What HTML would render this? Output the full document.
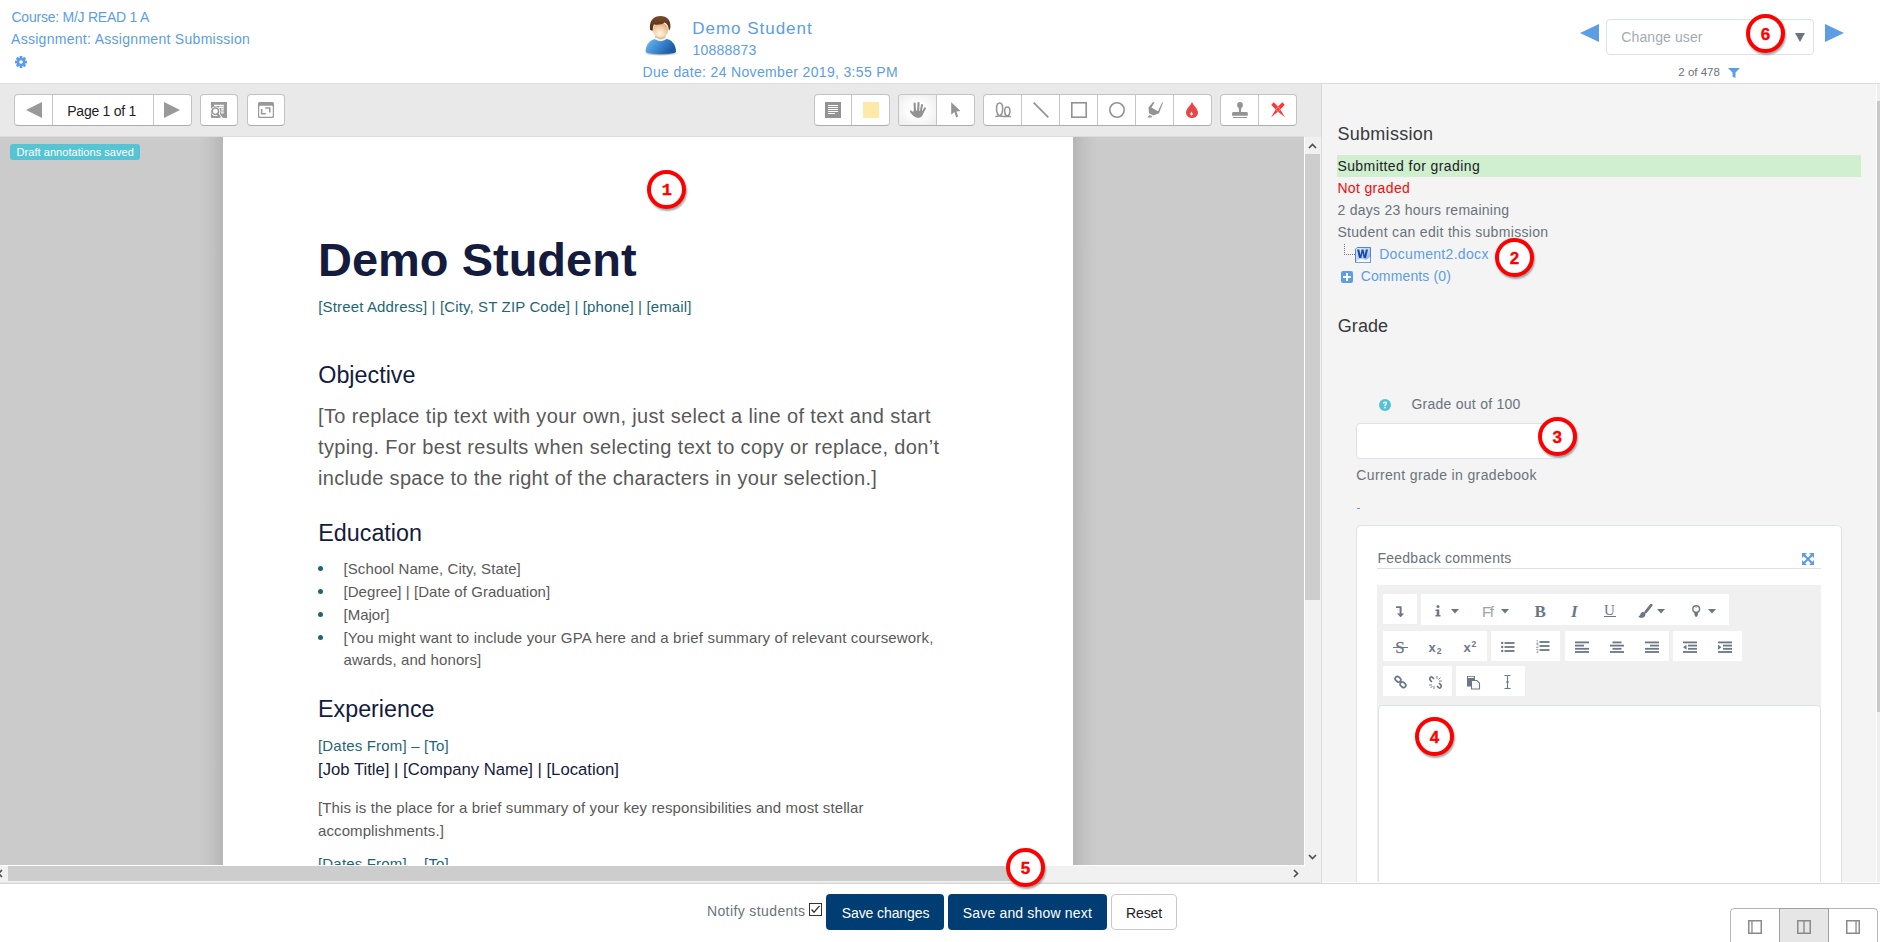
<!DOCTYPE html>
<html><head><meta charset="utf-8">
<style>
html,body{margin:0;padding:0;}
body{width:1880px;height:942px;overflow:hidden;position:relative;background:#fff;font-family:"Liberation Sans",sans-serif;}
.a{position:absolute;box-sizing:border-box;}
.t{position:absolute;white-space:nowrap;line-height:1;}
svg{position:absolute;overflow:visible;}
</style></head><body>
<div class="a" style="left:0px;top:83px;width:1880px;height:1px;background:#dcdcdc;"></div>
<div class="t" style="left:11.5px;top:10.0px;font-size:14px;color:#5c9de5;letter-spacing:-0.24px;font-weight:normal;font-family:'Liberation Sans',sans-serif;">Course: M/J READ 1 A</div>
<div class="t" style="left:11.0px;top:32.0px;font-size:14px;color:#5c9de5;letter-spacing:0.29px;font-weight:normal;font-family:'Liberation Sans',sans-serif;">Assignment: Assignment Submission</div>
<svg style="left:15px;top:56px" width="12" height="12" viewBox="0 0 12 12"><g fill="#5c9de5"><circle cx="6" cy="6" r="4.3"/><rect x="4.6" y="0" width="2.8" height="12" transform="rotate(0 6 6)"/><rect x="4.6" y="0" width="2.8" height="12" transform="rotate(45 6 6)"/><rect x="4.6" y="0" width="2.8" height="12" transform="rotate(90 6 6)"/><rect x="4.6" y="0" width="2.8" height="12" transform="rotate(135 6 6)"/></g><circle cx="6" cy="6" r="1.8" fill="#fff"/></svg>
<svg style="left:643px;top:14px" width="37" height="42" viewBox="0 0 37 42">
<defs>
<radialGradient id="sk" cx="0.45" cy="0.75" r="0.8"><stop offset="0" stop-color="#fff6ea"/><stop offset="0.5" stop-color="#f2d0a8"/><stop offset="1" stop-color="#d8a06a"/></radialGradient>
<linearGradient id="sh" x1="0" y1="0" x2="1" y2="0.4"><stop offset="0" stop-color="#78bdf0"/><stop offset="0.5" stop-color="#3f8fd6"/><stop offset="1" stop-color="#1c5aa6"/></linearGradient>
<linearGradient id="hr" x1="0" y1="0" x2="0" y2="1"><stop offset="0" stop-color="#7a4a28"/><stop offset="1" stop-color="#4e2c14"/></linearGradient>
<radialGradient id="sd" cx="0.5" cy="0.5" r="0.5"><stop offset="0" stop-color="#000" stop-opacity="0.6"/><stop offset="1" stop-color="#000" stop-opacity="0"/></radialGradient>
</defs>
<ellipse cx="18" cy="39.5" rx="17.5" ry="2.4" fill="url(#sd)"/>
<path d="M2.6 37.5 C2.6 30 8 25 14 24.5 L22 24.5 C28 25 33 30 33 37.5 C33 39.3 30 39.8 18 39.8 C6 39.8 2.6 39.3 2.6 37.5 Z" fill="url(#sh)"/>
<rect x="12" y="20" width="10.5" height="6" fill="#e6be93"/>
<path d="M11.5 24.8 Q17.5 29.5 24 24.8 L22.8 23.6 Q17.5 27.2 12.8 23.6 Z" fill="#f2f4f6"/>
<ellipse cx="17.5" cy="16" rx="7.7" ry="7.6" fill="url(#sk)"/>
<path d="M7 15.5 C6 6 11 1.9 17.5 1.9 C24 1.9 28 6 27.4 13 C27.2 14.8 26.6 16 26 16.4 C25.6 12.5 24.5 10 21.5 8.5 C19.5 10.5 15 11 11 10.5 C10 12 9.7 14 9.8 16.6 C8.6 16.8 7.3 16.2 7 15.5 Z" fill="url(#hr)"/>
</svg>
<div class="t" style="left:692.3px;top:20.0px;font-size:17px;color:#5c9de5;letter-spacing:0.97px;font-weight:normal;font-family:'Liberation Sans',sans-serif;">Demo Student</div>
<div class="t" style="left:692.5px;top:43.0px;font-size:14px;color:#5c9de5;letter-spacing:0.2px;font-weight:normal;font-family:'Liberation Sans',sans-serif;">10888873</div>
<div class="t" style="left:642.5px;top:65.0px;font-size:14px;color:#5c9de5;letter-spacing:0.34px;font-weight:normal;font-family:'Liberation Sans',sans-serif;">Due date: 24 November 2019, 3:55 PM</div>
<svg style="left:1580px;top:24px" width="19" height="18"><path d="M0 9 L19 0 L19 18 Z" fill="#5c9de5"/></svg>
<svg style="left:1825px;top:24px" width="19" height="18"><path d="M19 9 L0 0 L0 18 Z" fill="#5c9de5"/></svg>
<div class="a" style="left:1606px;top:19px;width:208px;height:36px;border:1px solid #dee2e6;border-radius:4px;background:#fff;"></div>
<div class="t" style="left:1621.3px;top:30.0px;font-size:14px;color:#a3abb3;letter-spacing:0.1px;font-weight:normal;font-family:'Liberation Sans',sans-serif;">Change user</div>
<svg style="left:1795px;top:33px" width="10" height="9"><path d="M0 0 L10 0 L5 9 Z" fill="#6c757d"/></svg>
<div class="t" style="left:1678.3px;top:67.0px;font-size:11.5px;color:#6a737b;letter-spacing:0px;font-weight:normal;font-family:'Liberation Sans',sans-serif;">2 of 478</div>
<svg style="left:1728px;top:68px" width="12" height="10" viewBox="0 0 12 10"><path d="M0 0 L12 0 L7.5 4.5 L7.5 10 L4.5 8.5 L4.5 4.5 Z" fill="#5c9de5"/></svg>
<div class="a" style="left:0px;top:84px;width:1321px;height:53px;background:#e9e9e9;"></div>
<div class="a" style="left:0px;top:136px;width:1304px;height:1px;background:#dcdcdc;"></div>
<div class="a" style="left:1321px;top:84px;width:1px;height:799px;background:#dadada;"></div>
<div class="a" style="left:14px;top:94px;width:178px;height:32px;background:#fff;border:1px solid #c3c3c3;border-bottom-color:#adadad;border-radius:4px;"></div>
<div class="a" style="left:52px;top:95px;width:1px;height:30px;background:#c6c6c6;"></div>
<div class="a" style="left:153px;top:95px;width:1px;height:30px;background:#c6c6c6;"></div>
<div class="t" style="left:67.3px;top:104.0px;font-size:14px;color:#1d2125;letter-spacing:-0.26px;font-weight:normal;font-family:'Liberation Sans',sans-serif;">Page 1 of 1</div>
<svg style="left:26px;top:102px" width="16" height="16"><path d="M0 8 L16 0 L16 16 Z" fill="#999"/></svg>
<svg style="left:164px;top:102px" width="16" height="16"><path d="M16 8 L0 0 L0 16 Z" fill="#999"/></svg>
<div class="a" style="left:200px;top:94px;width:38px;height:32px;background:#fff;border:1px solid #c3c3c3;border-bottom-color:#adadad;border-radius:4px;"></div>
<div class="a" style="left:247px;top:94px;width:38px;height:32px;background:#fff;border:1px solid #c3c3c3;border-bottom-color:#adadad;border-radius:4px;"></div>
<svg style="left:211px;top:102px" width="16" height="16" viewBox="0 0 16 16">
<rect width="16" height="16" fill="#999"/>
<path d="M3 2.7 H12.8 V4 H3 Z M8 4.6 H12.8 V5.9 H8 Z M10 6.6 H12.8 V7.8 H10 Z M10 8.4 H12.8 V9.6 H10 Z M10 10.2 H12.8 V11.4 H10 Z" fill="#fff"/>
<circle cx="4.4" cy="9.3" r="4.9" fill="#fff"/>
<path d="M5.5 12 L8.5 16 H12 L8 11 Z" fill="#fff"/>
<circle cx="4.4" cy="9.3" r="3.2" fill="none" stroke="#999" stroke-width="1.5"/>
<path d="M6.4 11.6 L9.2 15.6" stroke="#999" stroke-width="2"/>
<rect x="0" y="8" width="0.6" height="8" fill="#999"/>
</svg>
<svg style="left:258px;top:102px" width="16" height="16" viewBox="0 0 16 16">
<rect x="0" y="0" width="16" height="16" rx="1.6" fill="#999"/>
<rect x="1.2" y="3.8" width="13.6" height="11" rx="1" fill="#fff"/>
<path d="M2.9 6.9 H4.4 V11 H7.8 V12.5 H2.9 Z M7.3 5.2 H12.5 V10.5 H11 V6.7 H7.3 Z" fill="#999"/>
</svg>
<div class="a" style="left:814px;top:94px;width:76px;height:32px;background:#fff;border:1px solid #c3c3c3;border-bottom-color:#adadad;border-radius:4px;"></div>
<div class="a" style="left:851px;top:95px;width:1px;height:30px;background:#c6c6c6;"></div>
<div class="a" style="left:898px;top:94px;width:77px;height:32px;background:#fff;border:1px solid #c3c3c3;border-bottom-color:#adadad;border-radius:4px;"></div>
<div class="a" style="left:936px;top:95px;width:1px;height:30px;background:#c6c6c6;"></div>
<div class="a" style="left:899px;top:95px;width:37px;height:30px;background:radial-gradient(ellipse at center,#fff 30%,#ececec 100%);border-radius:3px 0 0 3px;"></div>
<div class="a" style="left:983px;top:94px;width:229px;height:32px;background:#fff;border:1px solid #c3c3c3;border-bottom-color:#adadad;border-radius:4px;"></div>
<div class="a" style="left:1021px;top:95px;width:1px;height:30px;background:#c6c6c6;"></div>
<div class="a" style="left:1059px;top:95px;width:1px;height:30px;background:#c6c6c6;"></div>
<div class="a" style="left:1097px;top:95px;width:1px;height:30px;background:#c6c6c6;"></div>
<div class="a" style="left:1135px;top:95px;width:1px;height:30px;background:#c6c6c6;"></div>
<div class="a" style="left:1173px;top:95px;width:1px;height:30px;background:#c6c6c6;"></div>
<div class="a" style="left:1220px;top:94px;width:77px;height:32px;background:#fff;border:1px solid #c3c3c3;border-bottom-color:#adadad;border-radius:4px;"></div>
<div class="a" style="left:1258px;top:95px;width:1px;height:30px;background:#c6c6c6;"></div>
<svg style="left:825px;top:102px" width="16" height="16" viewBox="0 0 16 16">
<rect width="16" height="16" fill="#939393"/>
<g fill="#fff" shape-rendering="crispEdges"><rect x="3" y="3" width="10" height="1"/><rect x="3" y="5" width="10" height="1"/><rect x="3" y="7" width="10" height="1"/><rect x="3" y="9" width="10" height="1"/><rect x="3" y="11" width="7" height="1"/></g>
</svg>
<div class="a" style="left:863px;top:102px;width:16px;height:16px;background:#ffe9a8;"></div>
<svg style="left:910px;top:102px" width="16" height="16" viewBox="0 0 16 16">
<g stroke="#939393" stroke-linecap="round" fill="none">
<path d="M4.6 1.6 L5 9" stroke-width="2.1"/>
<path d="M8.5 1.1 L8.2 8.5" stroke-width="2.1"/>
<path d="M12 3 L10.8 9.5" stroke-width="2"/>
<path d="M15 6.3 L12.3 11" stroke-width="2"/>
<path d="M1 9.6 L4.2 13.2" stroke-width="2.2"/>
</g>
<path d="M3.6 8.2 L13.6 9.2 C13.4 12.5 12 15.9 8 15.9 C5.2 15.9 3.9 14 2.8 12.3 Z" fill="#939393"/>
</svg>
<svg style="left:951px;top:102px" width="10" height="16" viewBox="0 0 10 16">
<path d="M0.2 0.3 L0.2 12.8 L3.4 10 L5.2 15.5 L7.2 14.6 L5.4 9.4 L9.4 8.9 Z" fill="#939393"/>
</svg>
<svg style="left:995px;top:102px" width="16" height="16" viewBox="0 0 16 16">
<path d="M0.3 14.6 Q2.5 14 4.6 14.1 C0.4 11.5 0.6 0.9 4.6 0.9 C8.6 0.9 8.8 11.5 4.6 14.1 Q8.5 14.9 12.3 14.2 C8.7 12.5 8.8 4.9 12.3 4.9 C15.8 4.9 15.9 12.5 12.3 14.2 Q14.2 14.7 15.8 14.6" fill="none" stroke="#939393" stroke-width="1.5"/>
</svg>
<svg style="left:1033px;top:102px" width="16" height="16"><path d="M0.7 0.7 L15.3 15.3" stroke="#939393" stroke-width="1.7"/></svg>
<svg style="left:1071px;top:102px" width="16" height="16"><rect x="0.8" y="0.8" width="14.4" height="14.4" fill="none" stroke="#939393" stroke-width="1.6"/></svg>
<svg style="left:1109px;top:102px" width="16" height="16"><circle cx="8" cy="8" r="7.2" fill="none" stroke="#939393" stroke-width="1.6"/></svg>
<svg style="left:1147px;top:102px" width="16" height="16" viewBox="0 0 16 16">
<path d="M0.2 15.6 L2.6 13.1 L5 14.2 L4.5 15.6 Z M1.5 5.4 L5.8 0.2 L7.7 0.2 L4.4 5.4 L11 9.2 L15.2 0.2 L16 0.8 L12 11.3 L6.4 13.6 L2 11.3 Z" fill="#939393"/>
</svg>
<svg style="left:1186px;top:102px" width="12" height="16" viewBox="0 0 12 16">
<path d="M6 0 C7.5 3.5 12 7 12 10.5 C12 13.8 9.3 16 6 16 C2.7 16 0 13.8 0 10.5 C0 7 4.5 3.5 6 0 Z" fill="#e84646"/>
<path d="M5.5 9.5 C6 10.5 6.8 11.5 6.8 12.3 C6.8 13 6.2 13.4 5.5 13.4 C4.8 13.4 4.3 13 4.3 12.3 C4.3 11.5 5 10.5 5.5 9.5 Z" fill="#fff"/>
</svg>
<svg style="left:1231px;top:102px" width="17" height="16" viewBox="0 0 17 16">
<circle cx="9" cy="3" r="2.9" fill="#939393"/>
<path d="M7.6 4.5 L10.4 4.5 L9.9 10.3 L8.1 10.3 Z" fill="#939393"/>
<path d="M1.1 11.3 Q1.1 10 2.4 10 L15.5 10 Q16.8 10 16.8 11.3 L16.8 13.8 L1.1 13.8 Z" fill="#939393"/>
<rect x="2.1" y="15" width="13.9" height="0.95" fill="#939393"/>
</svg>
<svg style="left:1271px;top:102px" width="14" height="16" viewBox="0 0 14 16">
<path d="M0.3 2.7 L2.7 0.3 L8.4 6.1 L13.9 15.2 L5.6 8.4 Z M13.7 2.7 L11.3 0.3 L5.6 6.1 L0.1 15.2 L8.4 8.4 Z" fill="#ff3535"/>
<path d="M4.8 7.3 L7 5 L9.2 7.3 L7 9.6 Z" fill="#ff3535"/>
</svg>
<div class="a" style="left:0;top:137px;width:1304px;height:728px;background:#cbcbcb;overflow:hidden;">
<div class="a" style="left:199px;top:0px;width:24px;height:729px;background:linear-gradient(90deg,rgba(0,0,0,0) 0,rgba(0,0,0,0.04) 50%,rgba(0,0,0,0.1) 100%);"></div>
<div class="a" style="left:1073px;top:0px;width:24px;height:729px;background:linear-gradient(270deg,rgba(0,0,0,0) 0,rgba(0,0,0,0.04) 50%,rgba(0,0,0,0.1) 100%);"></div>
<div class="a" style="left:223px;top:0;width:850px;height:760px;background:#fff;">
<div class="t" style="left:95.0px;top:99.0px;font-size:47px;color:#141b3d;letter-spacing:0px;font-weight:bold;font-family:'Liberation Sans',sans-serif;">Demo Student</div>
<div class="t" style="left:95.3px;top:162.0px;font-size:15px;color:#1e6674;letter-spacing:0.14px;font-weight:normal;font-family:'Liberation Sans',sans-serif;">[Street Address] | [City, ST ZIP Code] | [phone] | [email]</div>
<div class="t" style="left:95.3px;top:227.0px;font-size:23.3px;color:#141b3d;letter-spacing:0px;font-weight:normal;font-family:'Liberation Sans',sans-serif;">Objective</div>
<div class="t" style="left:95.0px;top:269.0px;font-size:20px;color:#595959;letter-spacing:0.36px;font-weight:normal;font-family:'Liberation Sans',sans-serif;">[To replace tip text with your own, just select a line of text and start</div>
<div class="t" style="left:95.0px;top:300.0px;font-size:20px;color:#595959;letter-spacing:0.35px;font-weight:normal;font-family:'Liberation Sans',sans-serif;">typing. For best results when selecting text to copy or replace, don’t</div>
<div class="t" style="left:95.0px;top:331.0px;font-size:20px;color:#595959;letter-spacing:0.33px;font-weight:normal;font-family:'Liberation Sans',sans-serif;">include space to the right of the characters in your selection.]</div>
<div class="t" style="left:95.3px;top:385.0px;font-size:23.3px;color:#141b3d;letter-spacing:0px;font-weight:normal;font-family:'Liberation Sans',sans-serif;">Education</div>
<div class="a" style="left:95px;top:428.5px;width:5px;height:5px;background:#1e6674;border-radius:50%;"></div>
<div class="t" style="left:120.5px;top:424.0px;font-size:15px;color:#595959;letter-spacing:0.1px;font-weight:normal;font-family:'Liberation Sans',sans-serif;">[School Name, City, State]</div>
<div class="a" style="left:95px;top:451.5px;width:5px;height:5px;background:#1e6674;border-radius:50%;"></div>
<div class="t" style="left:120.5px;top:447.0px;font-size:15px;color:#595959;letter-spacing:0.06px;font-weight:normal;font-family:'Liberation Sans',sans-serif;">[Degree] | [Date of Graduation]</div>
<div class="a" style="left:95px;top:474.5px;width:5px;height:5px;background:#1e6674;border-radius:50%;"></div>
<div class="t" style="left:120.5px;top:470.0px;font-size:15px;color:#595959;letter-spacing:0.0px;font-weight:normal;font-family:'Liberation Sans',sans-serif;">[Major]</div>
<div class="a" style="left:95px;top:497.5px;width:5px;height:5px;background:#1e6674;border-radius:50%;"></div>
<div class="t" style="left:120.5px;top:493.0px;font-size:15px;color:#595959;letter-spacing:0.165px;font-weight:normal;font-family:'Liberation Sans',sans-serif;">[You might want to include your GPA here and a brief summary of relevant coursework,</div>
<div class="t" style="left:120.5px;top:515.0px;font-size:15px;color:#595959;letter-spacing:0.1px;font-weight:normal;font-family:'Liberation Sans',sans-serif;">awards, and honors]</div>
<div class="t" style="left:95.0px;top:561.0px;font-size:23.3px;color:#141b3d;letter-spacing:0px;font-weight:normal;font-family:'Liberation Sans',sans-serif;">Experience</div>
<div class="t" style="left:95.0px;top:601.0px;font-size:15px;color:#1e6674;letter-spacing:0.18px;font-weight:normal;font-family:'Liberation Sans',sans-serif;">[Dates From] – [To]</div>
<div class="t" style="left:95.0px;top:625.0px;font-size:16.7px;color:#141b3d;letter-spacing:0px;font-weight:normal;font-family:'Liberation Sans',sans-serif;">[Job Title] | [Company Name] | [Location]</div>
<div class="t" style="left:95.0px;top:663.0px;font-size:15px;color:#595959;letter-spacing:0.114px;font-weight:normal;font-family:'Liberation Sans',sans-serif;">[This is the place for a brief summary of your key responsibilities and most stellar</div>
<div class="t" style="left:95.0px;top:686.0px;font-size:15px;color:#595959;letter-spacing:0.1px;font-weight:normal;font-family:'Liberation Sans',sans-serif;">accomplishments.]</div>
<div class="t" style="left:95.0px;top:719.0px;font-size:15px;color:#1e6674;letter-spacing:0.18px;font-weight:normal;font-family:'Liberation Sans',sans-serif;">[Dates From] – [To]</div>
</div>
<div class="a" style="left:10px;top:7px;width:130px;height:16px;background:#56c4d3;border-radius:3px;"></div>
<div class="t" style="left:16.6px;top:10.0px;font-size:11px;color:#fff;letter-spacing:0.05px;font-weight:normal;font-family:'Liberation Sans',sans-serif;">Draft annotations saved</div>
</div>
<div class="a" style="left:1304px;top:137px;width:17px;height:746px;background:#f1f1f1;"></div>
<div class="a" style="left:1304px;top:137px;width:1px;height:729px;background:#fff;"></div>
<div class="a" style="left:1305px;top:154px;width:15px;height:446px;background:#cdcdcd;"></div>
<div class="a" style="left:0px;top:865px;width:1304px;height:1px;background:#fff;"></div>
<div class="a" style="left:0px;top:866px;width:1304px;height:16px;background:#f1f1f1;"></div>
<svg style="left:1307px;top:142px" width="11" height="8"><path d="M2 6 L5.5 2.5 L9 6" fill="none" stroke="#505050" stroke-width="1.7"/></svg>
<svg style="left:1307px;top:853px" width="11" height="8"><path d="M2 2 L5.5 5.5 L9 2" fill="none" stroke="#505050" stroke-width="1.7"/></svg>
<svg style="left:-4px;top:868px" width="8" height="11"><path d="M6 2 L2.5 5.5 L6 9" fill="none" stroke="#505050" stroke-width="1.7"/></svg>
<svg style="left:1292px;top:868px" width="8" height="11"><path d="M2 2 L5.5 5.5 L2 9" fill="none" stroke="#505050" stroke-width="1.7"/></svg>
<div class="a" style="left:8px;top:866px;width:1012px;height:15px;background:#cdcdcd;"></div>
<div class="a" style="left:1322px;top:84px;width:1558px;height:799px;background:#f4f4f4;"></div>
<div class="a" style="left:1876px;top:84px;width:1px;height:799px;background:#fff;"></div>
<div class="a" style="left:1877px;top:84px;width:3px;height:799px;background:#eeeeee;"></div>
<div class="a" style="left:1877px;top:101px;width:3px;height:611px;background:#c8c8c8;"></div>
<div class="t" style="left:1337.4px;top:125.0px;font-size:18px;color:#373a3c;letter-spacing:0.3px;font-weight:normal;font-family:'Liberation Sans',sans-serif;">Submission</div>
<div class="a" style="left:1337px;top:155px;width:524px;height:22px;background:#cfefcf;"></div>
<div class="t" style="left:1337.4px;top:159.0px;font-size:14px;color:#1d2125;letter-spacing:0.43px;font-weight:normal;font-family:'Liberation Sans',sans-serif;">Submitted for grading</div>
<div class="t" style="left:1337.4px;top:181.0px;font-size:14px;color:#f50a0a;letter-spacing:0.35px;font-weight:normal;font-family:'Liberation Sans',sans-serif;">Not graded</div>
<div class="t" style="left:1337.4px;top:203.0px;font-size:14px;color:#6a737b;letter-spacing:0.28px;font-weight:normal;font-family:'Liberation Sans',sans-serif;">2 days 23 hours remaining</div>
<div class="t" style="left:1337.4px;top:225.0px;font-size:14px;color:#6a737b;letter-spacing:0.32px;font-weight:normal;font-family:'Liberation Sans',sans-serif;">Student can edit this submission</div>
<div class="a" style="left:1344px;top:244px;width:1px;height:10px;background:repeating-linear-gradient(180deg,#777 0,#777 1px,transparent 1px,transparent 2px);"></div>
<div class="a" style="left:1344px;top:254px;width:11px;height:1px;background:repeating-linear-gradient(90deg,#777 0,#777 1px,transparent 1px,transparent 2px);"></div>
<svg style="left:1355px;top:247px" width="16" height="16" viewBox="0 0 16 16">
<defs><linearGradient id="wg" x1="0" y1="0" x2="1" y2="1"><stop offset="0" stop-color="#e6eefa"/><stop offset="0.6" stop-color="#b9cff0"/><stop offset="1" stop-color="#6f97d6"/></linearGradient></defs>
<path d="M2.2 0.5 H15.5 V15.5 H0.5 V2.2 Z" fill="url(#wg)" stroke="#5a82c8" stroke-width="1"/>
<path d="M0.8 15.2 C3 12 7 11.5 9 12.5 C11 13.5 13 12 15.2 9.5 V15.2 Z" fill="#fff" opacity="0.9"/>
<path d="M2 2.6 H4.3 L5.4 8.2 L6.6 2.6 H8.5 L9.7 8.2 L10.8 2.6 H13 L11 11 H8.7 L7.5 5.8 L6.3 11 H4 Z" fill="#1448b0"/>
</svg>
<div class="t" style="left:1379.2px;top:247.0px;font-size:14px;color:#5c9de5;letter-spacing:0.32px;font-weight:normal;font-family:'Liberation Sans',sans-serif;">Document2.docx</div>
<div class="a" style="left:1341px;top:271px;width:12px;height:12px;background:#5c9de5;border-radius:2px;"></div>
<div class="a" style="left:1346px;top:273px;width:2px;height:8px;background:#fff;"></div>
<div class="a" style="left:1343px;top:276px;width:8px;height:2px;background:#fff;"></div>
<div class="t" style="left:1360.7px;top:269.0px;font-size:14px;color:#5c9de5;letter-spacing:0.14px;font-weight:normal;font-family:'Liberation Sans',sans-serif;">Comments (0)</div>
<div class="t" style="left:1337.8px;top:317.0px;font-size:18px;color:#373a3c;letter-spacing:0.05px;font-weight:normal;font-family:'Liberation Sans',sans-serif;">Grade</div>
<svg style="left:1379px;top:399px" width="12" height="12" viewBox="0 0 12 12">
<circle cx="6" cy="6" r="6" fill="#58c2d2"/>
<path d="M4 4.6 C4 3.3 4.9 2.6 6 2.6 C7.2 2.6 8.1 3.3 8.1 4.4 C8.1 5.6 6.7 5.8 6.7 7 L5.3 7 C5.3 5.4 6.6 5.3 6.6 4.5 C6.6 4.1 6.4 3.9 6 3.9 C5.6 3.9 5.4 4.2 5.4 4.6 Z" fill="#fff"/>
<rect x="5.3" y="7.8" width="1.4" height="1.5" fill="#fff"/>
</svg>
<div class="t" style="left:1411.4px;top:397.0px;font-size:14px;color:#6a737b;letter-spacing:0.26px;font-weight:normal;font-family:'Liberation Sans',sans-serif;">Grade out of 100</div>
<div class="a" style="left:1356px;top:423px;width:201px;height:36px;background:#fff;border:1px solid #dee2e6;border-radius:4px;"></div>
<div class="t" style="left:1356.3px;top:468.0px;font-size:14px;color:#6a737b;letter-spacing:0.36px;font-weight:normal;font-family:'Liberation Sans',sans-serif;">Current grade in gradebook</div>
<div class="a" style="left:1357px;top:508px;width:3px;height:1px;background:#5c9de5;"></div>
<div class="a" style="left:1356px;top:525px;width:486px;height:400px;background:#fff;border:1px solid #dee3e8;border-radius:5px;"></div>
<div class="t" style="left:1377.5px;top:551.0px;font-size:14px;color:#6a737b;letter-spacing:0.24px;font-weight:normal;font-family:'Liberation Sans',sans-serif;">Feedback comments</div>
<div class="a" style="left:1377px;top:568px;width:444px;height:1px;background:#dee2e6;"></div>
<svg style="left:1802px;top:553px" width="12" height="12" viewBox="0 0 12 12">
<g fill="#5c9de5"><path d="M0 0 H5 L0 5 Z M12 0 V5 L7 0 Z M0 12 V7 L5 12 Z M12 12 H7 L12 7 Z"/></g>
<path d="M1.5 1.5 L10.5 10.5 M10.5 1.5 L1.5 10.5" stroke="#5c9de5" stroke-width="2.1"/>
</svg>
<div class="a" style="left:1377px;top:585px;width:444px;height:300px;background:#f0f0f0;"></div>
<div class="a" style="left:1383px;top:594px;width:34px;height:30px;background:#fff;"></div>
<div class="a" style="left:1421px;top:594px;width:308px;height:31px;background:#fff;"></div>
<div class="a" style="left:1383px;top:631px;width:104px;height:30px;background:#fff;"></div>
<div class="a" style="left:1491px;top:631px;width:69px;height:30px;background:#fff;"></div>
<div class="a" style="left:1565px;top:631px;width:104px;height:30px;background:#fff;"></div>
<div class="a" style="left:1673px;top:631px;width:69px;height:30px;background:#fff;"></div>
<div class="a" style="left:1383px;top:666px;width:69px;height:30px;background:#fff;"></div>
<div class="a" style="left:1456px;top:666px;width:69px;height:30px;background:#fff;"></div>
<svg style="left:1395.8px;top:605.7px" width="9" height="11.4" viewBox="0 0 9 11.4"><path d="M0 0.3 H5.6 V7.6 H8.2 L4.6 11.2 L1 7.6 H3.6 V2 H0 Z" fill="#6c7785"/></svg>
<svg style="left:1435.0px;top:605.0px" width="6" height="12" viewBox="0 0 6 12"><circle cx="3" cy="1.5" r="1.5" fill="#6c7785"/><path d="M0.5 4.5 H4.3 V10 H5.5 V11.5 H0.5 V10 H1.7 V6 H0.5 Z" fill="#6c7785"/></svg>
<svg style="left:1450.5px;top:609.0px" width="8" height="5" viewBox="0 0 8 5"><path d="M0 0 H8 L4 4.5 Z" fill="#6c7785"/></svg>
<div class="t" style="left:1482.0px;top:604.0px;font-size:15px;color:#9aa2ab;letter-spacing:-1.5px;font-weight:normal;font-family:'Liberation Sans',sans-serif;">Ff</div>
<svg style="left:1501.0px;top:609.0px" width="8" height="5" viewBox="0 0 8 5"><path d="M0 0 H8 L4 4.5 Z" fill="#6c7785"/></svg>
<div class="t" style="left:1534.5px;top:603.0px;font-size:17px;color:#6c7785;letter-spacing:0px;font-weight:bold;font-family:'Liberation Serif',serif;">B</div>
<div class="t" style="left:1571.0px;top:603.0px;font-size:17px;color:#6c7785;letter-spacing:0px;font-weight:bold;font-style:italic;font-family:'Liberation Serif',serif;">I</div>
<div class="t" style="left:1604.0px;top:603.0px;font-size:15px;color:#6c7785;letter-spacing:0px;font-weight:normal;font-family:'Liberation Serif',serif;">U</div>
<div class="a" style="left:1604px;top:616px;width:12px;height:1px;background:#6c7785;"></div>
<svg style="left:1637.7px;top:603.7px" width="14.6" height="14" viewBox="0 0 14.6 14"><path d="M13.2 1.2 L7.8 7.8" stroke="#6c7785" stroke-width="2.8" stroke-linecap="round"/><path d="M6.6 8.2 C5 7.6 3.2 8.2 2.6 9.8 C2.2 11 1.6 12.2 0.3 12.6 C1.6 14.2 5.5 14.6 7 12 C7.8 10.8 7.6 9.2 6.6 8.2 Z" fill="#6c7785"/></svg>
<svg style="left:1657.0px;top:609.0px" width="8" height="5" viewBox="0 0 8 5"><path d="M0 0 H8 L4 4.5 Z" fill="#6c7785"/></svg>
<svg style="left:1691.8px;top:605.4px" width="8.4" height="12" viewBox="0 0 8.4 12"><circle cx="4.2" cy="4.1" r="3.4" fill="none" stroke="#6c7785" stroke-width="1.4"/><path d="M2.4 6.8 L3.2 8.5 H5.2 L6 6.8" fill="none" stroke="#6c7785" stroke-width="1.3"/><rect x="2.5" y="8.3" width="3.4" height="2.6" rx="0.8" fill="#6c7785"/><rect x="3.2" y="10.6" width="2" height="1.2" rx="0.5" fill="#6c7785"/><path d="M3.2 2.2 Q4.2 1.8 5 2.6" fill="none" stroke="#6c7785" stroke-width="0.6"/></svg>
<svg style="left:1708.0px;top:609.0px" width="8" height="5" viewBox="0 0 8 5"><path d="M0 0 H8 L4 4.5 Z" fill="#6c7785"/></svg>
<div class="t" style="left:1395.3px;top:639.0px;font-size:17px;color:#6c7785;letter-spacing:0px;font-weight:normal;font-family:'Liberation Serif',serif;-webkit-text-stroke:0.3px #6c7785;">S</div>
<div class="a" style="left:1393px;top:647px;width:15px;height:1px;background:#6c7785;"></div>
<div class="t" style="left:1428.5px;top:641.0px;font-size:13px;color:#6c7785;letter-spacing:0px;font-weight:bold;font-family:'Liberation Sans',sans-serif;">x</div>
<div class="t" style="left:1436.8px;top:647.0px;font-size:8.5px;color:#6c7785;letter-spacing:0px;font-weight:bold;font-family:'Liberation Sans',sans-serif;">2</div>
<div class="t" style="left:1463.5px;top:641.0px;font-size:13px;color:#6c7785;letter-spacing:0px;font-weight:bold;font-family:'Liberation Sans',sans-serif;">x</div>
<div class="t" style="left:1471.6px;top:640.0px;font-size:8.5px;color:#6c7785;letter-spacing:0px;font-weight:bold;font-family:'Liberation Sans',sans-serif;">2</div>
<svg style="left:1501.2px;top:640.5px" width="14" height="12" viewBox="0 0 14 12"><circle cx="1.2" cy="2" r="1.2" fill="#6c7785"/><circle cx="1.2" cy="6" r="1.2" fill="#6c7785"/><circle cx="1.2" cy="10" r="1.2" fill="#6c7785"/><rect x="3.5" y="1.1" width="10" height="1.8" fill="#6c7785"/><rect x="3.5" y="5.1" width="10" height="1.8" fill="#6c7785"/><rect x="3.5" y="9.1" width="10" height="1.8" fill="#6c7785"/></svg>
<svg style="left:1535.7px;top:640.0px" width="14" height="13" viewBox="0 0 14 13"><text x="0" y="3.5" font-size="4.5" font-family="Liberation Sans" fill="#6c7785">1</text><text x="0" y="8" font-size="4.5" font-family="Liberation Sans" fill="#6c7785">2</text><text x="0" y="12.5" font-size="4.5" font-family="Liberation Sans" fill="#6c7785">3</text><rect x="3.5" y="1.1" width="10" height="1.8" fill="#6c7785"/><rect x="3.5" y="5.1" width="10" height="1.8" fill="#6c7785"/><rect x="3.5" y="9.1" width="10" height="1.8" fill="#6c7785"/></svg>
<svg style="left:1574.6px;top:640.5px" width="14" height="12" viewBox="0 0 14 12"><rect x="0" y="0.5" width="14" height="1.8" fill="#6c7785"/><rect x="0" y="3.7" width="9" height="1.8" fill="#6c7785"/><rect x="0" y="6.9" width="14" height="1.8" fill="#6c7785"/><rect x="0" y="10.1" width="14" height="1.8" fill="#6c7785"/></svg>
<svg style="left:1609.6px;top:640.5px" width="14" height="12" viewBox="0 0 14 12"><rect x="2.5" y="0.5" width="9" height="1.8" fill="#6c7785"/><rect x="0" y="3.7" width="14" height="1.8" fill="#6c7785"/><rect x="2.5" y="6.9" width="9" height="1.8" fill="#6c7785"/><rect x="0" y="10.1" width="14" height="1.8" fill="#6c7785"/></svg>
<svg style="left:1644.8px;top:640.5px" width="14" height="12" viewBox="0 0 14 12"><rect x="0" y="0.5" width="14" height="1.8" fill="#6c7785"/><rect x="5" y="3.7" width="9" height="1.8" fill="#6c7785"/><rect x="0" y="6.9" width="14" height="1.8" fill="#6c7785"/><rect x="0" y="10.1" width="14" height="1.8" fill="#6c7785"/></svg>
<svg style="left:1682.8px;top:640.5px" width="14" height="12" viewBox="0 0 14 12"><rect x="0" y="0.5" width="14" height="1.8" fill="#6c7785"/><rect x="5" y="3.7" width="9" height="1.8" fill="#6c7785"/><rect x="5" y="6.9" width="9" height="1.8" fill="#6c7785"/><rect x="0" y="10.1" width="14" height="1.8" fill="#6c7785"/><path d="M0 6.2 L3.5 3.7 V8.7 Z" fill="#6c7785"/></svg>
<svg style="left:1717.6px;top:640.5px" width="14" height="12" viewBox="0 0 14 12"><rect x="0" y="0.5" width="14" height="1.8" fill="#6c7785"/><rect x="5" y="3.7" width="9" height="1.8" fill="#6c7785"/><rect x="5" y="6.9" width="9" height="1.8" fill="#6c7785"/><rect x="0" y="10.1" width="14" height="1.8" fill="#6c7785"/><path d="M3.5 6.2 L0 3.7 V8.7 Z" fill="#6c7785"/></svg>
<svg style="left:1393.5px;top:675.5px" width="13" height="13" viewBox="0 0 13 13"><g fill="none" stroke="#6c7785" stroke-width="1.7"><rect x="1" y="1" width="6" height="4.5" rx="2.2" transform="rotate(40 4 3.2)"/><rect x="6" y="6.5" width="6" height="4.5" rx="2.2" transform="rotate(40 9 8.7)"/></g></svg>
<svg style="left:1428.5px;top:675.5px" width="13" height="13" viewBox="0 0 13 13"><g fill="none" stroke="#6c7785" stroke-width="1.7"><path d="M5 3 L3.5 1.5 C2.5 0.5 1 1 0.8 2.5 C0.7 3.3 1 4 1.6 4.6 L3 6"/><path d="M8 10 L9.5 11.5 C10.5 12.5 12 12 12.2 10.5 C12.3 9.7 12 9 11.4 8.4 L10 7"/></g><path d="M8 0 V3 M11.5 1.5 L9.5 3.5 M13 5 H10 M0 9 H3 M1.5 12 L3.5 10 M5 13 V10" stroke="#6c7785" stroke-width="0.9"/></svg>
<svg style="left:1466.6px;top:675.8px" width="13" height="13.5" viewBox="0 0 13 13.5"><rect x="0" y="0" width="8" height="10.5" fill="#6c7785"/><rect x="1" y="0.8" width="6" height="1.2" fill="#fff"/><path d="M4.5 4.5 H9.8 L12.5 7.2 V13 H4.5 Z" fill="#fff" stroke="#6c7785" stroke-width="1.1"/></svg>
<svg style="left:1504.1px;top:675.0px" width="7" height="14" viewBox="0 0 7 14"><path d="M0.5 0.5 H2.5 C3 0.5 3.5 1 3.5 1.5 C3.5 1 4 0.5 4.5 0.5 H6.5 M3.5 1.5 V12.5 M0.5 13.5 H2.5 C3 13.5 3.5 13 3.5 12.5 C3.5 13 4 13.5 4.5 13.5 H6.5 M2 7 H5" fill="none" stroke="#6c7785" stroke-width="1.1"/></svg>
<div class="a" style="left:1378px;top:705px;width:443px;height:200px;background:#fff;border:1px solid #dee2e6;border-radius:4px;"></div>
<div class="a" style="left:0px;top:882px;width:1880px;height:60px;background:#fff;"></div>
<div class="a" style="left:0px;top:882px;width:1322px;height:1px;background:#e6e6e6;"></div>
<div class="a" style="left:0px;top:883px;width:1880px;height:1px;background:#d6d6d6;"></div>
<div class="t" style="left:706.9px;top:904.0px;font-size:14px;color:#6a737b;letter-spacing:0.4px;font-weight:normal;font-family:'Liberation Sans',sans-serif;">Notify students</div>
<svg style="left:809px;top:903px" width="13" height="13" viewBox="0 0 13 13">
<rect x="0.5" y="0.5" width="12" height="12" fill="#fff" stroke="#333" stroke-width="1"/>
<path d="M2.5 6.5 L5 9.2 L10.5 2.8" fill="none" stroke="#333" stroke-width="1.3"/>
</svg>
<div class="a" style="left:826px;top:894px;width:118px;height:36px;background:#003d73;border-radius:4px;"></div>
<div class="t" style="left:841.8px;top:906.0px;font-size:14px;color:#fff;letter-spacing:-0.1px;font-weight:normal;font-family:'Liberation Sans',sans-serif;">Save changes</div>
<div class="a" style="left:948px;top:894px;width:159px;height:36px;background:#003d73;border-radius:4px;"></div>
<div class="t" style="left:962.8px;top:906.0px;font-size:14px;color:#fff;letter-spacing:0.17px;font-weight:normal;font-family:'Liberation Sans',sans-serif;">Save and show next</div>
<div class="a" style="left:1111px;top:894px;width:66px;height:36px;background:#fff;border:1px solid #c8c8c8;border-radius:4px;"></div>
<div class="t" style="left:1126.0px;top:906.0px;font-size:14px;color:#1d2125;letter-spacing:-0.1px;font-weight:normal;font-family:'Liberation Sans',sans-serif;">Reset</div>
<div class="a" style="left:1730px;top:908px;width:148px;height:40px;background:#fff;border:1px solid #b5b5b5;border-radius:4px;"></div>
<div class="a" style="left:1780px;top:909px;width:49px;height:33px;background:#e6e6e6;"></div>
<div class="a" style="left:1779px;top:908px;width:1px;height:34px;background:#9f9f9f;"></div>
<div class="a" style="left:1828px;top:908px;width:1px;height:34px;background:#9f9f9f;"></div>
<div class="a" style="left:1779px;top:908px;width:50px;height:1px;background:#9f9f9f;"></div>
<svg style="left:1748px;top:920px" width="14" height="14"><rect x="0.75" y="0.75" width="12.5" height="12.5" fill="none" stroke="#8a8a8a" stroke-width="1.5"/><rect x="3.3" y="0.75" width="1.3" height="12.5" fill="#8a8a8a"/></svg>
<svg style="left:1797px;top:920px" width="14" height="14"><rect x="0.75" y="0.75" width="12.5" height="12.5" fill="none" stroke="#8a8a8a" stroke-width="1.5"/><rect x="6.3" y="0.75" width="1.4" height="12.5" fill="#8a8a8a"/></svg>
<svg style="left:1846px;top:920px" width="14" height="14"><rect x="0.75" y="0.75" width="12.5" height="12.5" fill="none" stroke="#8a8a8a" stroke-width="1.5"/><rect x="9.4" y="0.75" width="1.3" height="12.5" fill="#8a8a8a"/></svg>
<div class="a" style="left:647.1px;top:170.1px;width:38.8px;height:38.8px;border-radius:50%;background:#fff;border:4px solid #ff0000;box-shadow:1px 2px 2px rgba(40,60,60,0.45);"></div>
<div class="t" style="left:661.7px;top:182.0px;font-size:17px;color:#ff0000;letter-spacing:0px;font-weight:bold;font-family:'Liberation Mono',monospace;-webkit-text-stroke:0.35px #ff0000;">1</div>
<div class="a" style="left:1495.1px;top:238.3px;width:38.8px;height:38.8px;border-radius:50%;background:#fff;border:4px solid #ff0000;box-shadow:1px 2px 2px rgba(40,60,60,0.45);"></div>
<div class="t" style="left:1509.7px;top:250.0px;font-size:17px;color:#ff0000;letter-spacing:0px;font-weight:bold;font-family:'Liberation Sans',sans-serif;-webkit-text-stroke:0.35px #ff0000;">2</div>
<div class="a" style="left:1538.0px;top:417.2px;width:38.8px;height:38.8px;border-radius:50%;background:#fff;border:4px solid #ff0000;box-shadow:1px 2px 2px rgba(40,60,60,0.45);"></div>
<div class="t" style="left:1552.6px;top:429.0px;font-size:17px;color:#ff0000;letter-spacing:0px;font-weight:bold;font-family:'Liberation Sans',sans-serif;-webkit-text-stroke:0.35px #ff0000;">3</div>
<div class="a" style="left:1415.1px;top:717.1px;width:38.8px;height:38.8px;border-radius:50%;background:#fff;border:4px solid #ff0000;box-shadow:1px 2px 2px rgba(40,60,60,0.45);"></div>
<div class="t" style="left:1429.7px;top:729.0px;font-size:17px;color:#ff0000;letter-spacing:0px;font-weight:bold;font-family:'Liberation Sans',sans-serif;-webkit-text-stroke:0.35px #ff0000;">4</div>
<div class="a" style="left:1006.1px;top:848.1px;width:38.8px;height:38.8px;border-radius:50%;background:#fff;border:4px solid #ff0000;box-shadow:1px 2px 2px rgba(40,60,60,0.45);"></div>
<div class="t" style="left:1020.7px;top:860.0px;font-size:17px;color:#ff0000;letter-spacing:0px;font-weight:bold;font-family:'Liberation Sans',sans-serif;-webkit-text-stroke:0.35px #ff0000;">5</div>
<div class="a" style="left:1746.2px;top:14.4px;width:38.8px;height:38.8px;border-radius:50%;background:#fff;border:4px solid #ff0000;box-shadow:1px 2px 2px rgba(40,60,60,0.45);"></div>
<div class="t" style="left:1760.8px;top:26.0px;font-size:17px;color:#ff0000;letter-spacing:0px;font-weight:bold;font-family:'Liberation Sans',sans-serif;-webkit-text-stroke:0.35px #ff0000;">6</div>
</body></html>
